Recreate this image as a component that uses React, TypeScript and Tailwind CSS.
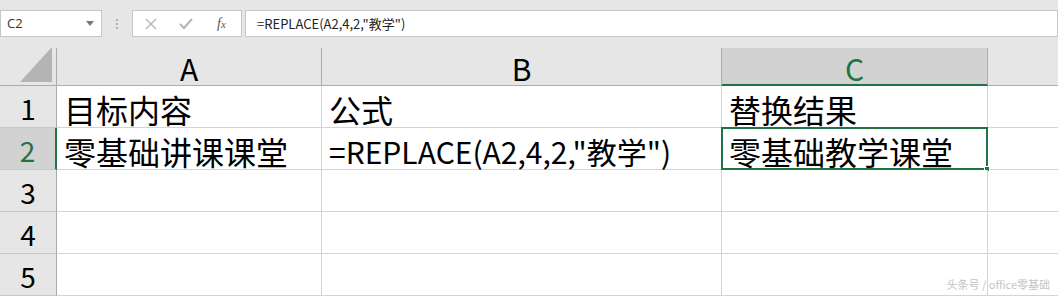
import React from 'react'

const cjk = "font-['Noto_Sans_CJK_SC','Noto_Sans',sans-serif]"

const rows = [
  { n: '1', a: '目标内容', b: '公式', c: '替换结果' },
  { n: '2', a: '零基础讲课课堂', b: '=REPLACE(A2,4,2,"教学")', c: '零基础教学课堂' },
  { n: '3', a: '', b: '', c: '' },
  { n: '4', a: '', b: '', c: '' },
  { n: '5', a: '', b: '', c: '' },
]

const Cell = ({ children, selected, small }: { children?: React.ReactNode; selected?: boolean; small?: boolean }) => (
  <div
    className={
      'relative bg-white border-r border-b border-[#d4d4d4] flex items-end pl-[7px] leading-none text-black whitespace-nowrap ' +
      (small ? 'text-[30px] pb-[3px]' : 'text-[32px] pb-[2px]')
    }
  >
    {children}
    {selected && (
      <div className="absolute left-[-1px] top-[-1px] right-[-1px] bottom-[-1px] border-2 border-[#217346]">
        <div className="absolute right-[-4px] bottom-[-4px] w-[6px] h-[6px] bg-[#217346] border border-white" />
      </div>
    )}
  </div>
)

const App = () => {
  return (
    <div className={`relative w-[1058px] h-[296px] overflow-hidden bg-[#e6e6e6] ${cjk}`}>
      {/* formula bar */}
      <div className="h-[48px] flex items-start pt-[10px]">
        <div className="w-[102px] h-[27px] bg-white border border-[#c6c6c6] flex items-center justify-between pl-[6px] pr-[7px]">
          <span className="text-[13px] text-[#333] font-['Open_Sans',sans-serif]">C2</span>
          <svg width="8" height="5" viewBox="0 0 8 5">
            <polygon points="0,0 8,0 4,5" fill="#777" />
          </svg>
        </div>
        <div className="w-[30px] h-[27px] flex flex-col items-center justify-center gap-[2px]">
          <span className="w-[2px] h-[2px] bg-[#b0b0b0]" />
          <span className="w-[2px] h-[2px] bg-[#b0b0b0]" />
          <span className="w-[2px] h-[2px] bg-[#b0b0b0]" />
        </div>
        <div className="w-[110px] h-[27px] bg-white border border-[#c6c6c6] flex items-center pl-[12px]">
          <svg width="12" height="12" viewBox="0 0 12 12" className="mr-[22px]">
            <path d="M1 1 L11 11 M11 1 L1 11" stroke="#b5b5b5" strokeWidth="1.4" fill="none" />
          </svg>
          <svg width="14" height="12" viewBox="0 0 14 12" className="mr-[24px]">
            <path d="M1 6 L5 10 L13 1" stroke="#b5b5b5" strokeWidth="2" fill="none" />
          </svg>
          <span className="text-[14px] italic text-[#555] font-['Liberation_Serif',serif] leading-none">
            f<span className="text-[11px]">x</span>
          </span>
        </div>
        <div className="ml-[3px] flex-1 h-[27px] bg-white border border-[#c6c6c6] flex items-center pl-[11px]">
          <span className="text-[13px] text-[#222]">=REPLACE(A2,4,2,"教学")</span>
        </div>
      </div>

      {/* sheet */}
      <div className="grid grid-cols-[57px_265px_400px_266px_1fr] grid-rows-[38px_42px_42px_42px_42px_42px]">
        <div className="border-r border-b border-[#ababab] flex items-end justify-end pr-[4px] pb-[3px]">
          <svg width="32" height="35" viewBox="0 0 32 35">
            <polygon points="32,0 32,35 0,35" fill="#b4b4b4" />
          </svg>
        </div>
        {['A', 'B'].map((c) => (
          <div key={c} className="border-r border-b border-[#ababab] flex items-center justify-center text-[30px] text-black leading-none pt-[2px]">
            {c}
          </div>
        ))}
        <div className="bg-[#d2d2d2] border-r border-[#ababab] border-b-2 border-b-[#217346] flex items-center justify-center text-[30px] text-[#217346] leading-none pt-[3px]">
          C
        </div>
        <div className="border-b border-[#ababab]" />

        {rows.map((r) => {
          const sel = r.n === '2'
          return (
            <React.Fragment key={r.n}>
              <div
                className={
                  sel
                    ? 'bg-[#d2d2d2] border-r-2 border-r-[#217346] border-b border-b-[#c8c8c8] flex items-center justify-center text-[28px] text-[#217346] leading-none pt-[2px]'
                    : 'border-r border-r-[#ababab] border-b border-b-[#c8c8c8] flex items-center justify-center text-[28px] text-black leading-none pt-[2px]'
                }
              >
                {r.n}
              </div>
              <Cell>{r.a}</Cell>
              <Cell small={r.n === '2'}>{r.b}</Cell>
              <Cell selected={sel}>{r.c}</Cell>
              <div className="bg-white border-b border-[#d4d4d4]" />
            </React.Fragment>
          )
        })}
      </div>

      {/* watermark */}
      <div className="absolute right-[8px] bottom-[6px] text-[11px] text-[#c4c4c4] leading-none">头条号 / office零基础</div>
    </div>
  )
}

export default App
